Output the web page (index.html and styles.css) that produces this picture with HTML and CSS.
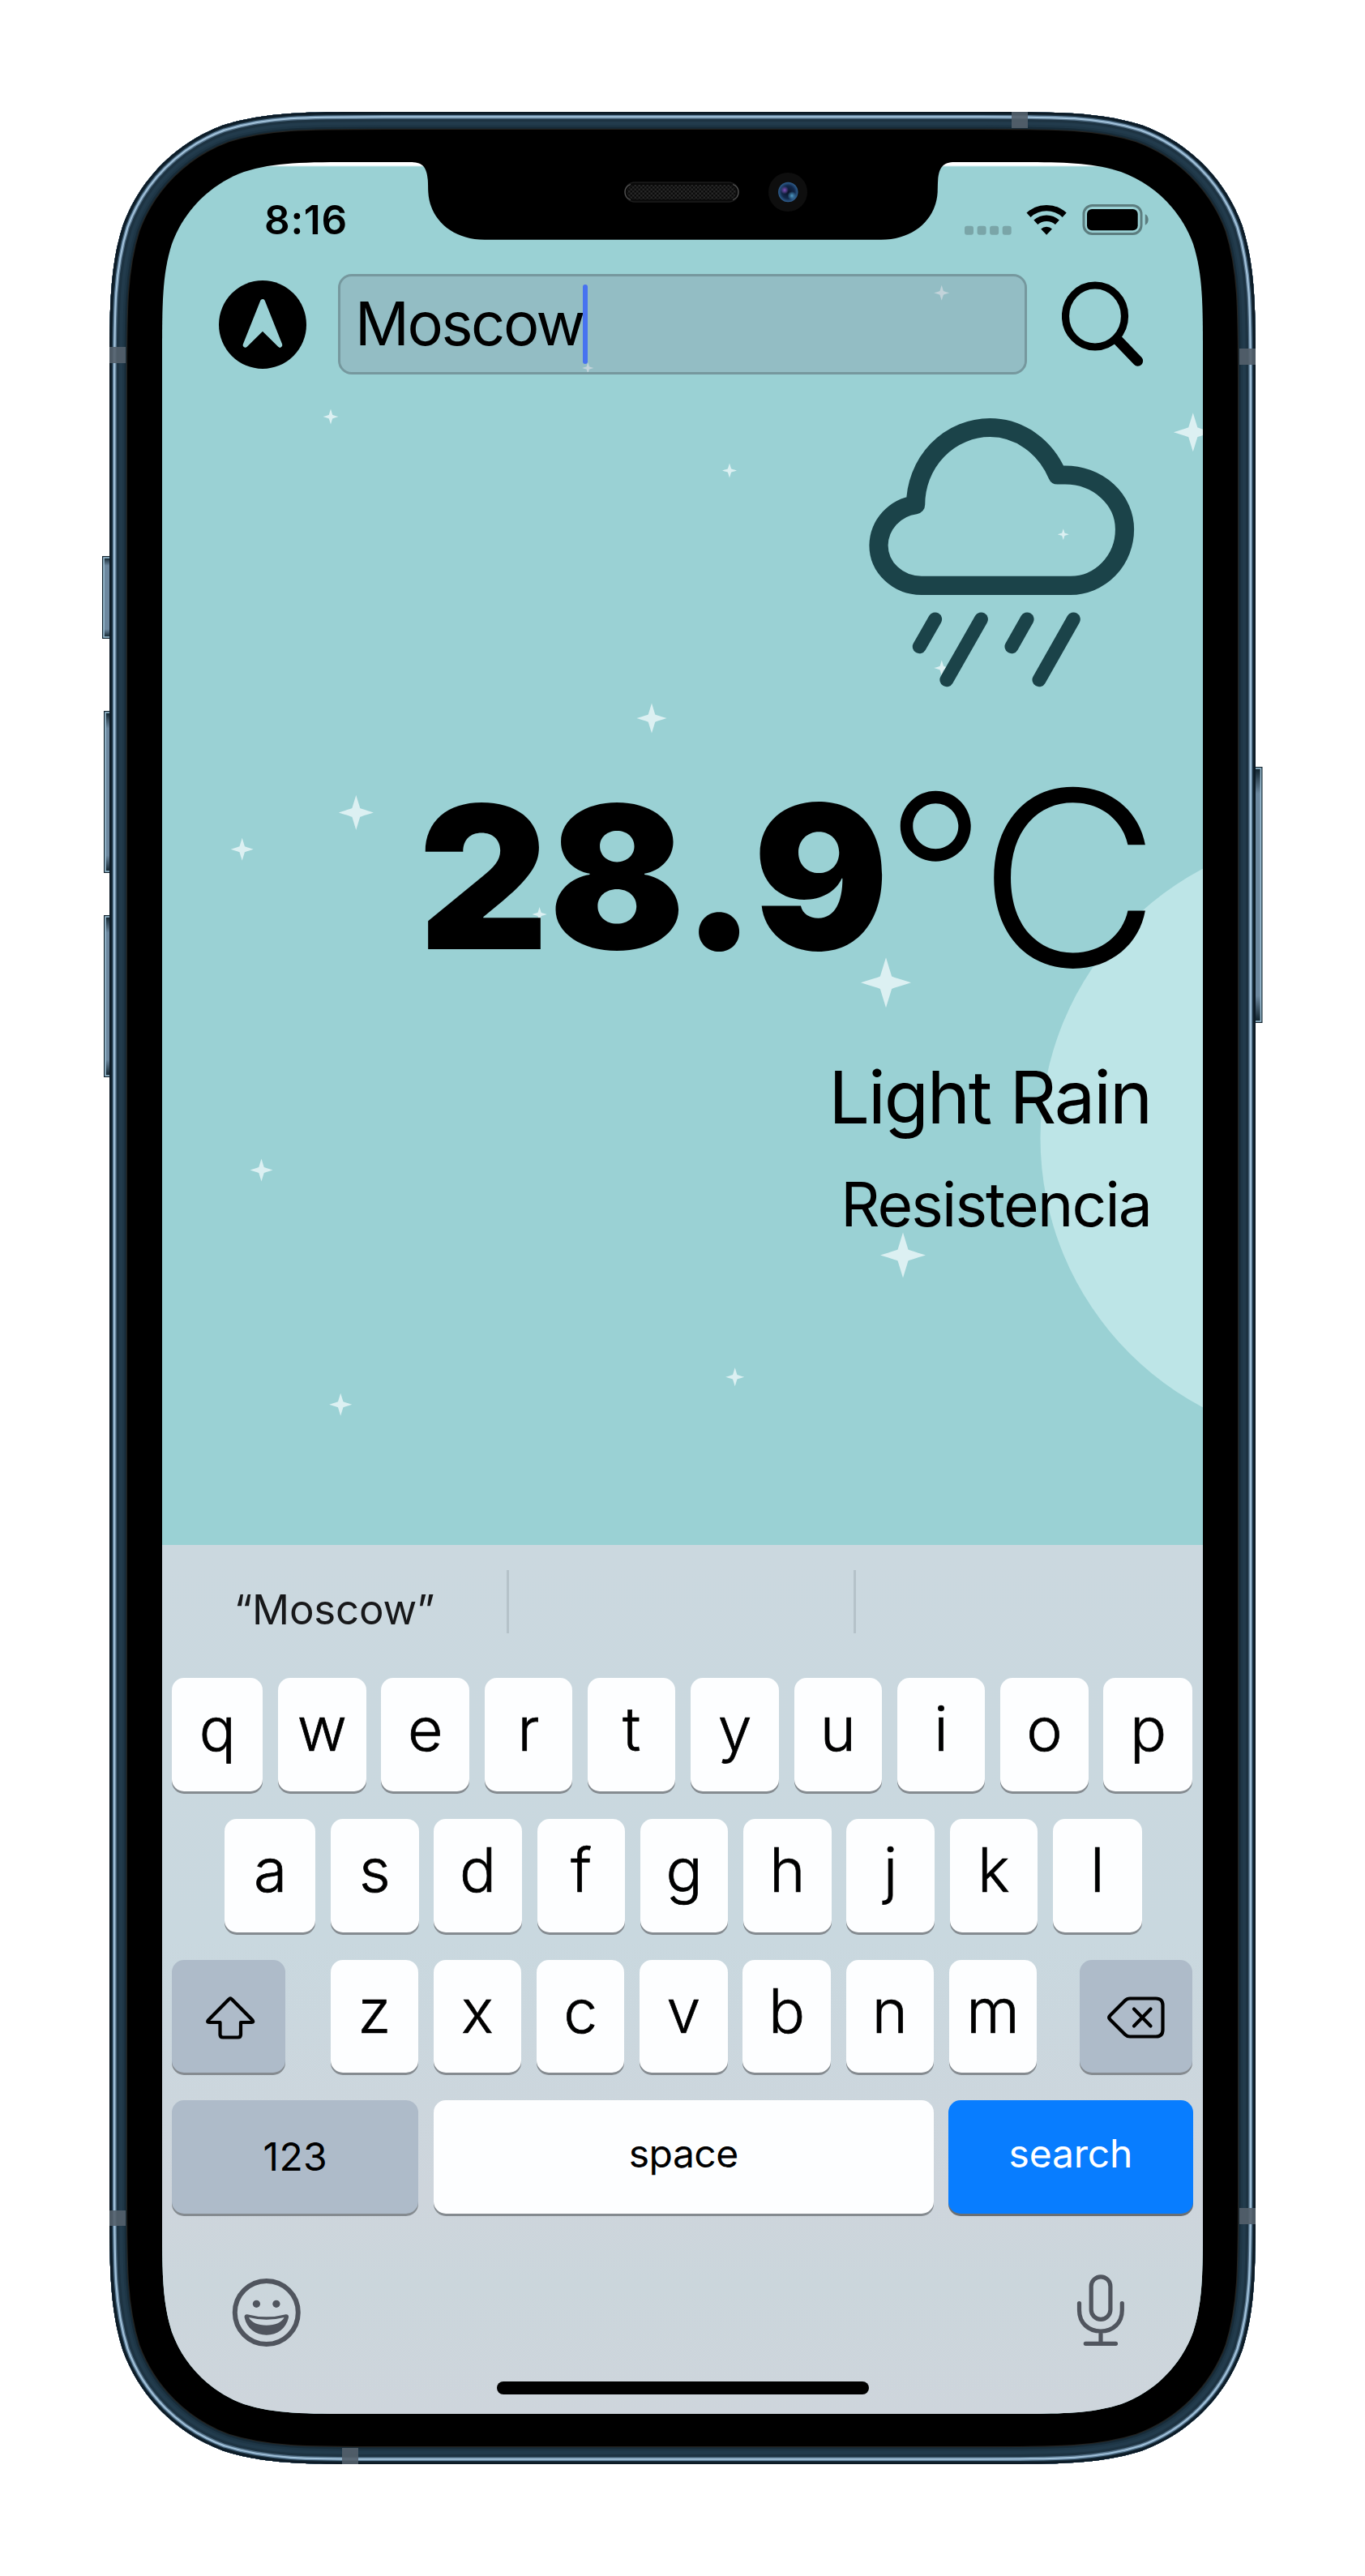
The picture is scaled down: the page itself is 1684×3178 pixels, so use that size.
FILE: index.html
```html
<!DOCTYPE html>
<html lang="en">
<head>
<meta charset="utf-8">
<title>Weather</title>
<link rel="stylesheet" href="styles.css">
</head>
<body>
<main class="phone">
  <svg class="chassis" viewBox="0 0 1434 2902" width="1434" height="2902" aria-hidden="true">
    <defs>
      <path id="body" d="M349.4 0H1084.6C1182.3 0 1231.2 0 1283.8 16.6C1341.2 37.5 1386.5 82.8 1407.4 140.2C1424 192.8 1424 241.7 1424 339.4V2562.6C1424 2660.3 1424 2709.2 1407.4 2761.8C1386.5 2819.2 1341.2 2864.5 1283.8 2885.4C1231.2 2902 1182.3 2902 1084.6 2902H349.4C251.7 2902 202.8 2902 150.2 2885.4C92.8 2864.5 47.5 2819.2 26.6 2761.8C10 2709.2 10 2660.3 10 2562.6V339.4C10 241.7 10 192.8 26.6 140.2C47.5 82.8 92.8 37.5 150.2 16.6C202.8 0 251.7 0 349.4 0Z"/>
      <clipPath id="bodyClip"><use href="#body"/></clipPath>
      <linearGradient id="btn" x1="0" x2="0" y1="0" y2="1">
        <stop offset="0" stop-color="#10222c"/><stop offset=".1" stop-color="#6c879e"/><stop offset=".9" stop-color="#6c879e"/><stop offset="1" stop-color="#10222c"/>
      </linearGradient>
      <radialGradient id="lens"><stop offset="0" stop-color="#0a1428"/><stop offset=".65" stop-color="#12284a"/><stop offset="1" stop-color="#2f5f8f"/></radialGradient>
      <radialGradient id="glow1"><stop offset="0" stop-color="#8050b8"/><stop offset="1" stop-color="#8050b8" stop-opacity="0"/></radialGradient>
      <radialGradient id="glow2"><stop offset="0" stop-color="#4f9cc8"/><stop offset="1" stop-color="#4f9cc8" stop-opacity="0"/></radialGradient>
    </defs>
    <g fill="url(#btn)" stroke="#9fc3d8" stroke-width="1.6">
      <g stroke="#13242e" stroke-width="4">
        <rect x="3" y="550" width="12" height="98"/><rect x="5" y="741" width="12" height="196"/><rect x="5" y="993" width="12" height="196"/><rect x="1419" y="810" width="11.5" height="312"/>
      </g>
      <rect x="3" y="550" width="12" height="98"/><rect x="5" y="741" width="12" height="196"/><rect x="5" y="993" width="12" height="196"/><rect x="1419" y="810" width="11.5" height="312"/>
    </g>
    <use href="#body" fill="#000"/>
    <g clip-path="url(#bodyClip)" fill="none">
      <use href="#body" stroke="#23221f" stroke-width="44"/>
      <use href="#body" stroke="#172b38" stroke-width="41.6"/>
      <use href="#body" stroke="#1e3646" stroke-width="37"/>
      <use href="#body" stroke="#223b4c" stroke-width="32"/>
      <use href="#body" stroke="#1d3342" stroke-width="24"/>
      <use href="#body" stroke="#56738a" stroke-width="17.4"/>
      <use href="#body" stroke="#a3c3db" stroke-width="14.6"/>
      <use href="#body" stroke="#6585a0" stroke-width="10.6"/>
      <use href="#body" stroke="#1a303e" stroke-width="8"/>
      <use href="#body" stroke="#0c1a25" stroke-width="5"/>
    </g>
    <g fill="#54616c" fill-opacity=".9">
      <rect x="10" y="290" width="20" height="20"/><rect x="1123" y="0" width="20" height="20"/><rect x="1404" y="292" width="20" height="20"/>
      <rect x="10" y="2589" width="20" height="19"/><rect x="1404" y="2586" width="20" height="20"/><rect x="297" y="2882" width="20" height="20"/>
    </g>
  </svg>

  <section class="screen">
    <svg class="backdrop" viewBox="200 200 1284 1706" width="1284" height="1706" aria-hidden="true">
      <defs><path id="star" d="M0-1L.23-.25Q.25-.23 1 0Q.25.23.23.25L0 1L-.23.25Q-.25.23-1 0Q-.25-.23-.23-.25Z"/></defs>
      <circle cx="1659" cy="1404" r="375.5" fill="#bde5e7"/>
      <g fill="#dcf0f2">
        <use href="#star" transform="translate(1471.8 533.3) scale(24)"/>
        <use href="#star" transform="translate(1311.8 659.3) scale(7)"/>
        <use href="#star" transform="translate(1161.8 824) scale(9.5)"/>
        <use href="#star" transform="translate(1161.7 361.3) scale(9.5)"/>
        <use href="#star" transform="translate(725.3 454) scale(7)"/>
        <use href="#star" transform="translate(408 514) scale(9.5)"/>
        <use href="#star" transform="translate(900 580.5) scale(9)"/>
        <use href="#star" transform="translate(804 886) scale(18.5)"/>
        <use href="#star" transform="translate(439.3 1002.4) scale(21.5)"/>
        <use href="#star" transform="translate(298.7 1047.7) scale(14)"/>
        <use href="#star" transform="translate(1093 1212.3) scale(31)"/>
        <use href="#star" transform="translate(665.6 1128) scale(9)"/>
        <use href="#star" transform="translate(1114 1548.4) scale(28)"/>
        <use href="#star" transform="translate(322.5 1443.6) scale(14)"/>
        <use href="#star" transform="translate(906.7 1698.8) scale(11.5)"/>
        <use href="#star" transform="translate(420.2 1732.7) scale(14)"/>
      </g>
    </svg>

    <header class="status">
      <span class="clock">8:16</span>
      <svg class="status-icons" viewBox="1190 251.5 228 38" width="228" height="38" aria-label="Status">
        <g fill="#7aa5a8"><rect x="1190" y="278.3" width="11" height="11" rx="3"/><rect x="1205.6" y="278.3" width="11" height="11" rx="3"/><rect x="1221.1" y="278.3" width="11" height="11" rx="3"/><rect x="1236.7" y="278.3" width="11" height="11" rx="3"/></g>
        <path d="M1269 264.8A32.5 32.5 0 0 1 1313.2 264.8M1277.8 273.8A20 20 0 0 1 1304.4 273.8" fill="none" stroke="#000" stroke-width="7.4"/>
        <path d="M1291.1 289.3L1284.2 281.9A10 10 0 0 1 1298 281.9Z"/>
        <rect x="1337" y="253" width="71" height="35" rx="10.5" fill="none" stroke="#5c7d7f" stroke-width="3"/>
        <rect x="1341" y="257.5" width="62.7" height="26.3" rx="6"/>
        <path d="M1412.8 263.8C1418 266 1418 275 1412.8 277.3Z" fill="#5c7d7f"/>
      </svg>
    </header>

    <div class="search-row">
      <svg class="locate" viewBox="270 346.5 108 109" width="108" height="109" aria-label="Current location">
        <ellipse cx="324" cy="401" rx="54" ry="54.5"/>
        <path d="M324 372.5L302.7 426.2L324 405.2L345.3 426.2Z" fill="#9ad1d4" stroke="#9ad1d4" stroke-width="6" stroke-linejoin="round"/>
      </svg>
      <div class="field"><span class="query">Moscow</span><span class="caret"></span></div>
      <svg class="find" viewBox="1310 346 102 108" width="102" height="108" aria-label="Search">
        <ellipse cx="1351" cy="390" rx="36.5" ry="38" fill="none" stroke="#000" stroke-width="9.2"/>
        <path d="M1378 418.5L1403.7 445.3" stroke="#000" stroke-width="12.8" stroke-linecap="round"/>
      </svg>
    </div>

    <section class="weather">
      <svg class="condition-icon" viewBox="1072 510 328 340" width="328" height="340" fill="none" stroke="#1b4349" aria-label="Rain">
        <path d="M1136.8 722.3A52.8 49.6 0 0 1 1084 672.7A52.5 51.5 0 0 1 1129.6 622.7A91.8 95.2 0 0 1 1221.4 527.5A91.8 101 0 0 1 1304.6 586H1314A73.5 67 0 0 1 1387.5 653A66.8 69.3 0 0 1 1320.7 722.3Z" stroke-width="23.2" stroke-linejoin="round"/>
        <path d="M1153.6 764L1134.3 797.7M1210.4 764L1167.9 838.7M1267.1 764L1248 797.7M1324.3 764L1282 838.7" stroke-width="17" stroke-linecap="round"/>
      </svg>
      <div class="temperature"><span class="degrees">28.9</span><span class="degree-sign">°</span><span class="unit">C</span></div>
      <p class="condition">Light Rain</p>
      <p class="city">Resistencia</p>
    </section>

    <section class="keyboard">
      <div class="suggestions">
        <div class="suggestion">“Moscow”</div><i class="divider"></i><div class="suggestion"></div><i class="divider"></i><div class="suggestion"></div>
      </div>
      <div class="keys">
        <div class="row">
          <b class="key first">q</b><b class="key">w</b><b class="key">e</b><b class="key">r</b><b class="key">t</b><b class="key">y</b><b class="key">u</b><b class="key">i</b><b class="key">o</b><b class="key last">p</b>
        </div>
        <div class="row inset">
          <b class="key first">a</b><b class="key">s</b><b class="key">d</b><b class="key">f</b><b class="key">g</b><b class="key">h</b><b class="key">j</b><b class="key">k</b><b class="key last">l</b>
        </div>
        <div class="row">
          <b class="key mod shift">
            <svg viewBox="250 2458 68 62" width="68" height="62" fill="none" stroke="#000" stroke-width="4.2" stroke-linejoin="round" aria-label="Shift"><path d="M284.2 2465.3Q285 2465.3 286 2466.5L311.5 2492.3Q313.3 2495 310.5 2495H297V2510Q297 2513.5 293.5 2513.5H275Q271.5 2513.5 271.5 2510V2495H258Q255 2495 257 2492.3L282.4 2466.5Q283.4 2465.3 284.2 2465.3Z"/></svg>
          </b>
          <div class="letters"><b class="key">z</b><b class="key">x</b><b class="key">c</b><b class="key">v</b><b class="key">b</b><b class="key">n</b><b class="key">m</b></div>
          <b class="key mod">
            <svg viewBox="1365 2458 75 62" width="75" height="62" fill="none" stroke="#000" stroke-width="4.2" stroke-linejoin="round" stroke-linecap="round" aria-label="Delete"><path d="M1395 2465.5H1427Q1435.5 2465.5 1435.5 2474V2504Q1435.5 2512.5 1427 2512.5H1395Q1391.5 2512.5 1389 2510L1370.5 2491.5Q1368 2489 1370.5 2486.5L1389 2468Q1391.5 2465.5 1395 2465.5ZM1400 2478.5L1420.5 2499.5M1420.5 2478.5L1400 2499.5"/></svg>
          </b>
        </div>
        <div class="row">
          <b class="key word num">123</b><b class="key word space">space</b><b class="key word go">search</b>
        </div>
      </div>
      <div class="tray">
        <svg class="emoji" viewBox="286 2810 86 86" width="86" height="86" aria-label="Emoji">
          <circle cx="328.8" cy="2853" r="39" fill="none" stroke="#50555e" stroke-width="6"/>
          <circle cx="316.4" cy="2842.3" r="4.6" fill="#50555e"/><circle cx="340.9" cy="2842.3" r="4.6" fill="#50555e"/>
          <path d="M305 2855.2Q328.8 2861.5 352.6 2855.2Q356.5 2855 356 2859C353 2873 342 2880.7 328.8 2880.7S304.6 2873 301.6 2859Q301.1 2855 305 2855.2ZM307 2859C310 2865 318 2868.8 328.8 2868.8S347.6 2865 350.6 2859Q328.8 2864.5 307 2859Z" fill="#50555e" fill-rule="evenodd"/>
        </svg>
        <svg viewBox="1327 2804 62 92" width="62" height="92" fill="none" stroke="#50555e" stroke-width="5.2" stroke-linecap="round" aria-label="Dictation">
          <rect x="1346.2" y="2808.8" width="23.7" height="52.5" rx="11.85"/>
          <path d="M1331.5 2841.5V2850C1331.5 2866 1343 2876 1358 2876S1384.3 2866 1384.3 2850V2841.5M1358 2877V2890M1339.3 2891.3H1376.5"/>
        </svg>
      </div>
      <div class="home-bar"></div>
    </section>
  </section>

  <svg class="notch" viewBox="500 196 690 100" width="690" height="100" aria-hidden="true">
    <defs><pattern id="mesh" width="5" height="5" patternUnits="userSpaceOnUse"><rect width="5" height="5" fill="#0c0c0c"/><path d="M0 0H2.5V2.5H0ZM2.5 2.5H5V5H2.5Z" fill="#262626"/></pattern></defs>
    <path d="M500 196V200H507C522 200 526.5 207 527.8 222C528.2 228 528 230 528.3 237C530 269 556 295.7 598 295.7H1087C1129 295.7 1155 269 1156.7 237C1157 230 1156.8 228 1157.2 222C1158.5 207 1163 200 1178 200H1190V196Z"/>
    <rect x="771" y="225" width="140" height="24" rx="12" fill="#0a0a0a" stroke="#1c1c1c" stroke-width="1.5"/>
    <path d="M778 227.5Q771 230 771 237T778 246.5M904 227.5Q911 230 911 237T904 246.5" fill="none" stroke="#555" stroke-width="1.2"/>
    <rect x="774" y="228" width="134" height="18" rx="9" fill="url(#mesh)"/>
    <circle cx="972" cy="237" r="24" fill="#0e0e0e"/>
    <circle cx="972.3" cy="237" r="12.2" fill="url(#lens)"/>
    <circle cx="968" cy="234.5" r="5" fill="url(#glow1)"/>
    <circle cx="977" cy="241.5" r="5.5" fill="url(#glow2)"/>
  </svg>
</main>
</body>
</html>
```
FILE: styles.css
```css
* { box-sizing: border-box; }

body {
  margin: 0;
  background: #fff;
  font-family: Inter, "Liberation Sans", sans-serif;
  color: #000;
}

p { margin: 0; }
svg { display: block; flex: none; }

.phone {
  position: relative;
  width: 1414px;
  height: 2902px;
  margin: 138px auto;
  padding: 62px 65px;
}

.chassis { position: absolute; left: -10px; top: 0; }

/* the notch covers the top edge of the display */
.notch { position: absolute; left: 365px; top: 58px; }

.screen {
  position: relative;
  display: flex;
  flex-direction: column;
  width: 1284px;
  height: 2778px;
  background: linear-gradient(#fff 4px, #9ad1d4 6px);
  clip-path: path("M244.6 0H1039.4C1109.8 0 1145 0 1183 12C1224.3 27 1257 59.7 1272 101C1284 139 1284 174.2 1284 244.6V2533.4C1284 2603.8 1284 2639 1272 2677C1257 2718.3 1224.3 2751 1183 2766C1145 2778 1109.8 2778 1039.4 2778H244.6C174.2 2778 139 2778 101 2766C59.7 2751 27 2718.3 12 2677C0 2639 0 2603.8 0 2533.4V244.6C0 174.2 0 139 12 101C27 59.7 59.7 27 101 12C139 0 174.2 0 244.6 0Z");
}

.backdrop { position: absolute; left: 0; top: 0; }
.status, .search-row, .weather, .keyboard { position: relative; }

.status {
  display: flex;
  justify-content: space-between;
  align-items: flex-start;
  height: 137.5px;
  padding: 46px 66px 0 126px;
}
.clock { font-size: 49.5px; line-height: 50px; font-weight: 600; letter-spacing: .7px; }
.status-icons { margin-top: 5.5px; }

.search-row {
  display: flex;
  align-items: center;
  height: 124px;
  padding: 0 72px 0 70px;
}
.locate { margin-top: 1px; }
.field {
  display: flex;
  width: 849.5px;
  height: 124px;
  margin: 0 43.5px 0 39px;
  padding-left: 18px;
  border: 3px solid #76989e;
  border-radius: 17px;
  background: rgba(130, 140, 157, .29);
  background-clip: padding-box;
}
.query { font-size: 74px; line-height: 117px; letter-spacing: -2.4px; }
.caret {
  width: 6px;
  height: 98px;
  margin: 10px 0 0 -1px;
  border-radius: 3px;
  background: #4772f0;
}

.weather {
  display: flex;
  flex-direction: column;
  align-items: flex-end;
  padding-right: 64px;
}
.condition-icon { margin: 48.5px 20px 0 0; }
.temperature {
  display: flex;
  align-items: center;
  height: 300px;
  margin-top: 82.5px;
  line-height: 300px;
}
.degrees {
  margin-top: -2px;
  font-size: 246px;
  font-weight: 900;
  transform: scaleX(1.01);
  transform-origin: right;
}
.degree-sign { margin: -10px -4px 0 -5px; font-size: 274px; font-weight: 300; }
.unit {
  margin-right: -11px;
  font-size: 300px;
  font-weight: 300;
  transform: scaleX(1.03);
  transform-origin: right;
}
.condition { margin-top: 66.5px; font-size: 90px; line-height: 110px; letter-spacing: -2.1px; }
.city { margin-top: 32.4px; font-size: 75px; line-height: 90px; letter-spacing: -1.85px; }

.keyboard {
  height: 1072px;
  margin-top: auto;
  background: linear-gradient(#cbd8df, #c9d8df 45%, #ced5dc 75%, #cbd6dc 85%, #ced5dc);
}
.suggestions { display: flex; height: 164.4px; }
.suggestion {
  width: 425px;
  font-size: 51px;
  line-height: 160px;
  letter-spacing: -.2px;
  text-align: center;
  color: #17181a;
}
.divider { width: 3px; height: 78px; margin-top: 31px; background: #b5c2c9; }

.keys {
  display: flex;
  flex-direction: column;
  gap: 34.2px;
  padding: 0 12.5px 0 12.3px;
}
.row { display: flex; justify-content: space-between; }
.row.inset { padding: 0 62.7px 0 65.2px; }
.letters { display: flex; gap: 18.7px; margin-right: -3px; }
.key {
  display: flex;
  justify-content: center;
  width: 108.5px;
  height: 139.5px;
  border-radius: 15px;
  background: #fdfeff;
  box-shadow: 0 3px 0 #858b90;
  font-size: 75px;
  font-weight: 300;
  line-height: 125px;
  -webkit-text-stroke: .7px #000;
}
.first { width: 112px; }
.last { width: 110px; }
.mod { align-items: center; width: 139.8px; background: #aebbc9; }
.mod svg { margin-top: 3px; }
.shift svg { margin-left: 3px; }
.word {
  font-size: 48px;
  font-weight: 400;
  line-height: 132px;
  letter-spacing: -.5px;
  -webkit-text-stroke: 0;
}
.num { width: 304px; background: #aebbc9; line-height: 139px; letter-spacing: .3px; }
.space { width: 617px; }
.go { width: 301.3px; background: #087dff; color: #fff; box-shadow: 0 3px 0 #6b7074; letter-spacing: -.2px; }

.tray {
  display: flex;
  justify-content: space-between;
  align-items: flex-start;
  padding: 73px 95px 0 86px;
}
.emoji { margin-top: 6px; }
.home-bar {
  width: 459px;
  height: 15.5px;
  margin: 42.5px auto 0;
  border-radius: 8px;
  background: #000;
}
```
